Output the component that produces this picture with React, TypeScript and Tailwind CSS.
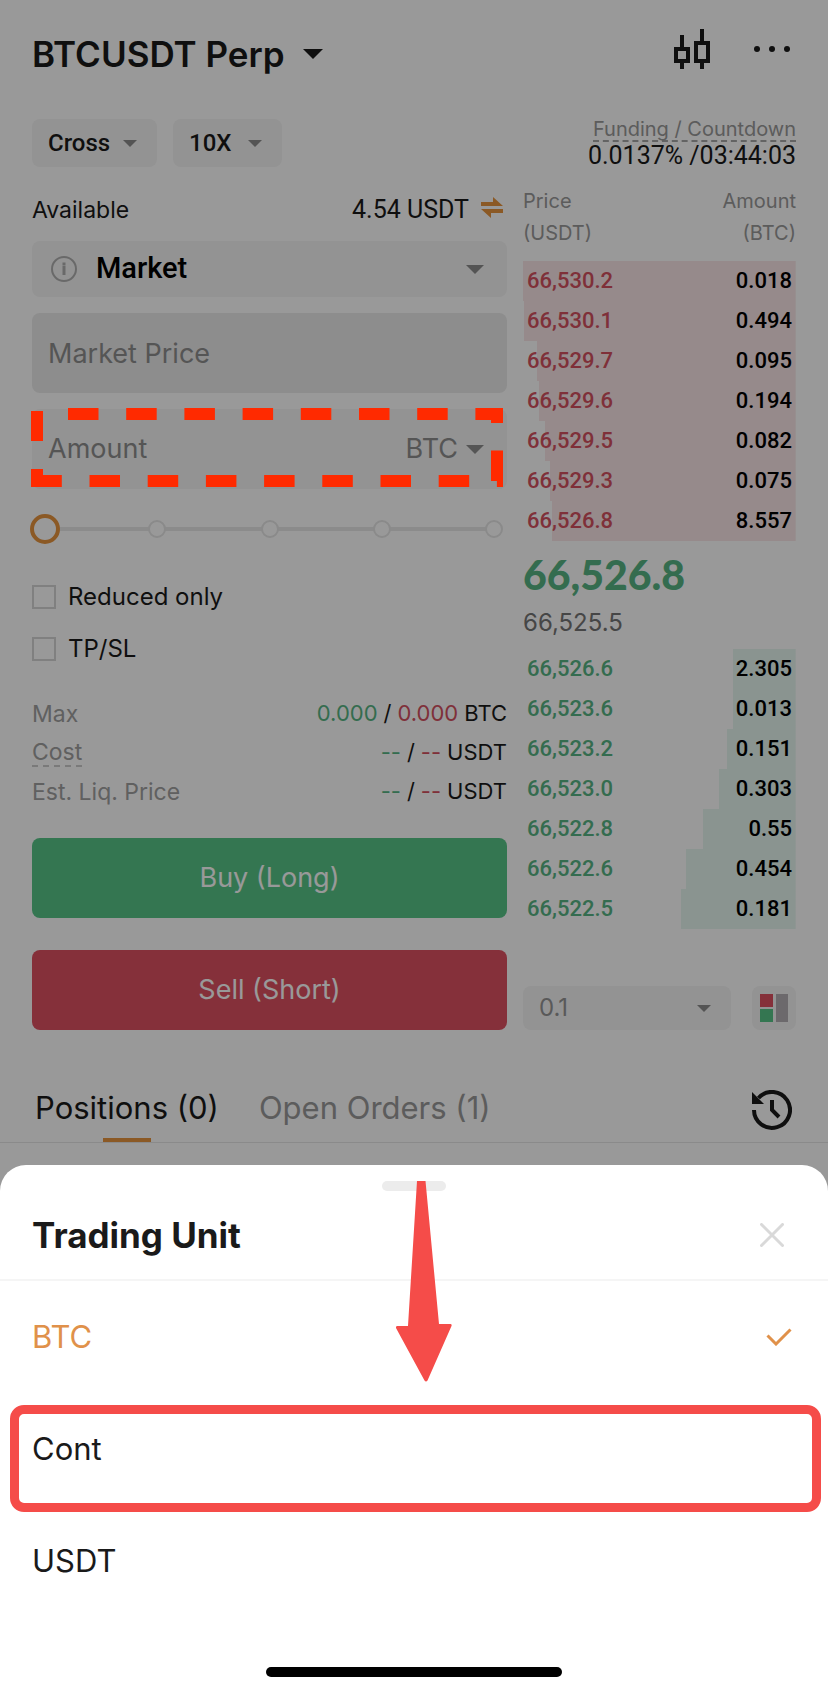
import { useState } from 'react';
import clsx from 'clsx';

const asks = [
  { price: '66,530.2', amount: '0.018', depth: 100 },
  { price: '66,530.1', amount: '0.494', depth: 99.5 },
  { price: '66,529.7', amount: '0.095', depth: 95 },
  { price: '66,529.6', amount: '0.194', depth: 94 },
  { price: '66,529.5', amount: '0.082', depth: 92 },
  { price: '66,529.3', amount: '0.075', depth: 90 },
  { price: '66,526.8', amount: '8.557', depth: 89.5 },
];

const bids = [
  { price: '66,526.6', amount: '2.305', depth: 23 },
  { price: '66,523.6', amount: '0.013', depth: 23 },
  { price: '66,523.2', amount: '0.151', depth: 25 },
  { price: '66,523.0', amount: '0.303', depth: 28 },
  { price: '66,522.8', amount: '0.55', depth: 34 },
  { price: '66,522.6', amount: '0.454', depth: 40 },
  { price: '66,522.5', amount: '0.181', depth: 42 },
];

const units = ['BTC', 'Cont', 'USDT'];

function Caret({ className }: { className?: string }) {
  return (
    <svg viewBox="0 0 18 9" className={className} fill="currentColor" aria-hidden="true">
      <path d="M0 0h18L9 9z" />
    </svg>
  );
}

interface DropdownProps {
  label: string;
  options: string[];
  className: string;
  caretClass: string;
}

function Dropdown({ label, options, className, caretClass }: DropdownProps) {
  return (
    <div className="relative flex items-center">
      <select aria-label={label} className={clsx('appearance-none rounded-lg bg-[#f5f5f5] outline-none', className)}>
        {options.map((o) => (
          <option key={o}>{o}</option>
        ))}
      </select>
      <Caret className={clsx('pointer-events-none absolute text-[#8c8c8c]', caretClass)} />
    </div>
  );
}

interface BookRowsProps {
  rows: typeof asks;
  priceClass: string;
  color: string;
}

function BookRows({ rows, priceClass, color }: BookRowsProps) {
  return (
    <tbody className="font-['Roboto',sans-serif] text-[22px] font-medium">
      {rows.map((row) => (
        <tr
          key={row.price}
          className="h-10"
          style={{ background: `linear-gradient(to left, ${color} ${row.depth}%, transparent ${row.depth}%)` }}
        >
          <td className={clsx('pb-0.5 pl-1', priceClass)}>{row.price}</td>
          <td className="pb-0.5 pr-1 text-right text-black">{row.amount}</td>
        </tr>
      ))}
    </tbody>
  );
}

function OrderBook() {
  return (
    <table className="w-full border-collapse">
      <thead>
        <tr className="text-left align-top text-[20px] leading-8 text-[#999999]">
          <th className="pb-3 font-normal">
            Price
            <br />
            (USDT)
          </th>
          <th className="pb-3 text-right font-normal">
            Amount
            <br />
            (BTC)
          </th>
        </tr>
      </thead>
      <BookRows rows={asks} priceClass="text-[#d4515f]" color="#fae6e8" />
      <tbody>
        <tr>
          <td colSpan={2} className="pb-0.5 pt-2.5">
            <p className="font-['Lato',sans-serif] text-[41px] font-black leading-[48px] text-[#57b584]">66,526.8</p>
            <p className="text-[24px] leading-[48px] text-[#757575]">66,525.5</p>
          </td>
        </tr>
      </tbody>
      <BookRows rows={bids} priceClass="text-[#57b584]" color="#e6f7f0" />
    </table>
  );
}

function InfoRow({ label, buy, sell, unit, hint }: { label: string; buy: string; sell: string; unit: string; hint?: boolean }) {
  return (
    <div className="flex h-[39px] items-center justify-between text-[22px]">
      <dt className={clsx('text-[23px] leading-[26px] text-[#a0a0a0]', hint && 'border-b-2 border-dashed border-[#cccccc]')}>
        {label}
      </dt>
      <dd className="flex gap-1.5 text-[#1a1a1a]">
        <span className="text-[#57b584]">{buy}</span>
        <span>/</span>
        <span className="text-[#d4515f]">{sell}</span>
        <span>{unit}</span>
      </dd>
    </div>
  );
}

function OrderForm({ onPickUnit }: { onPickUnit: () => void }) {
  const [percent, setPercent] = useState(0);

  return (
    <form className="flex flex-col" onSubmit={(e) => e.preventDefault()}>
      <div className="mb-1.5 flex h-[50px] items-center text-[23px] text-[#1a1a1a]">
        <span>Available</span>
        <span className="ml-auto font-['Roboto',sans-serif] text-[25px]">4.54 USDT</span>
        <button type="button" aria-label="Transfer" className="mb-1.5 ml-3 mr-1 text-[#e8953f]">
          <svg viewBox="0 0 22 21" className="h-[21px] w-[22px]" fill="currentColor">
            <path d="M0 5h12V0l10 9H0zM22 12v4H10v5L0 12z" />
          </svg>
        </button>
      </div>

      <div className="flex flex-col gap-4">
        <div className="relative">
          <Dropdown
            label="Order type"
            options={['Market', 'Limit']}
            className="h-14 w-full pl-16 text-[29px] font-medium text-black font-['Roboto',sans-serif]"
            caretClass="right-[23px] h-[9px] w-[18px]"
          />
          <svg viewBox="0 0 26 26" className="pointer-events-none absolute left-[19px] top-[15px] size-[26px] text-[#b0b0b0]" fill="none">
            <circle cx="13" cy="13" r="12" stroke="currentColor" strokeWidth="2" />
            <path d="M13 6.500v3M11.500 11.500H13V19" stroke="currentColor" strokeWidth="3" />
          </svg>
        </div>
        <input
          aria-label="Price"
          placeholder="Market Price"
          readOnly
          className="h-20 w-full rounded-lg bg-[#ebebeb] px-4 text-[27px] outline-none placeholder:text-[#8e8e8e]"
        />
        <div className="relative flex h-20 items-center rounded-lg bg-[#f5f5f5] pl-4 pr-[23px] text-[27px]">
          <input
            aria-label="Amount"
            placeholder="Amount"
            className="w-0 min-w-0 flex-1 bg-transparent outline-none placeholder:text-[#8e8e8e]"
          />
          <button type="button" onClick={onPickUnit} className="flex items-center gap-2 text-[#8e8e8e]">
            BTC
            <Caret className="h-[9px] w-[18px]" />
          </button>
          <svg
            viewBox="0 0 475 80"
            className="pointer-events-none absolute -left-px -top-px z-20 w-full"
            fill="none"
            stroke="#ff2a00"
            strokeWidth="12"
          >
            <path d="M37 6H466V73H30" strokeDasharray="30.500 27.700" />
            <path d="M6 33V3M6 79V61M6 73H30" />
          </svg>
        </div>
      </div>

      <div className="relative -ml-0.5 mr-1 mt-[25px] h-[30px]">
        <div className="absolute inset-x-4 top-[13px] h-1 bg-[#e8e8e8]" />
        <div className="flex h-full items-center justify-between pl-1.5">
          {[0, 25, 50, 75, 100].map((stop) => (
            <span key={stop} className="relative size-[18px] rounded-full border-2 border-[#e6e6e6] bg-white" />
          ))}
        </div>
        <input
          type="range"
          aria-label="Amount percentage"
          value={percent}
          step={25}
          onChange={(e) => setPercent(Number(e.target.value))}
          className="absolute inset-0 m-0 w-full appearance-none bg-transparent [&::-webkit-slider-thumb]:size-[30px] [&::-webkit-slider-thumb]:appearance-none [&::-webkit-slider-thumb]:rounded-full [&::-webkit-slider-thumb]:border-4 [&::-webkit-slider-thumb]:border-solid [&::-webkit-slider-thumb]:border-[#e8953f] [&::-webkit-slider-thumb]:bg-white"
        />
      </div>

      <div className="mt-[41px] flex flex-col gap-7">
        {['Reduced only', 'TP/SL'].map((name) => (
          <label key={name} className="flex items-center gap-3 text-[24px] leading-6 text-[#1a1a1a]">
            <input type="checkbox" className="size-6 appearance-none border-2 border-[#d6d6d6] checked:bg-[#e8953f]" />
            {name}
          </label>
        ))}
      </div>

      <dl className="mt-[33px]">
        <InfoRow label="Max" buy="0.000" sell="0.000" unit="BTC" />
        <InfoRow label="Cost" buy="--" sell="--" unit="USDT" hint />
        <InfoRow label="Est. Liq. Price" buy="--" sell="--" unit="USDT" />
      </dl>

      <div className="mt-[27px] flex flex-col gap-8 text-[27px] text-white">
        <button className="h-20 rounded-lg bg-[#57c587]">Buy (Long)</button>
        <button className="h-20 rounded-lg bg-[#de5061]">Sell (Short)</button>
      </div>
    </form>
  );
}

function UnitSheet({ unit, onSelect, onClose }: { unit: string; onSelect: (u: string) => void; onClose: () => void }) {
  return (
    <section role="dialog" aria-label="Trading Unit" className="relative z-20 rounded-t-[26px] bg-white pt-4 text-[#1a1a1a]">
      <div className="mx-auto h-2.5 w-16 rounded-full bg-[#ececec]" />
      <div className="flex h-[90px] items-center justify-between border-b-2 border-[#f5f5f5] pl-8 pr-11">
        <h2 className="text-[35px] font-bold">Trading Unit</h2>
        <button aria-label="Close" onClick={onClose} className="text-[#d9d9d9]">
          <svg viewBox="0 0 24 24" className="size-6" fill="none" stroke="currentColor" strokeWidth="3" strokeLinecap="round">
            <path d="M1.500 1.500l21 21M22.500 1.500l-21 21" />
          </svg>
        </button>
      </div>
      <ul>
        {units.map((u) => (
          <li key={u} className="relative">
            <button
              onClick={() => onSelect(u)}
              className={clsx('flex h-28 w-full items-center justify-between pl-8 pr-9 text-[31px]', u === unit && 'text-[#e0914a]')}
            >
              {u}
              {u === unit && (
                <svg viewBox="0 0 26 18" className="h-[18px] w-[26px]" fill="none" stroke="currentColor" strokeWidth="3">
                  <path d="M1.500 7.500L10 16L24.500 1.500" />
                </svg>
              )}
            </button>
            {u === 'Cont' && (
              <div className="pointer-events-none absolute left-2.5 right-[7px] top-3 h-[107px] rounded-[14px] border-[9px] border-[#f54c49]" />
            )}
          </li>
        ))}
      </ul>
      <div className="flex h-[76px] items-end justify-center pb-4">
        <div className="h-2.5 w-[296px] rounded-full bg-black" />
      </div>
      <svg viewBox="0 0 56 201" className="pointer-events-none absolute left-1/2 top-4 -ml-[18px] h-[201px] w-14" fill="#f54c49">
        <path d="M21 0h8.500L43 143h11.500q1.500 0 1 2L31.500 199.500q-1.500 2-3 0L0 147q-.5-1.800 1.500-2H12z" />
      </svg>
    </section>
  );
}

export default function App() {
  const [unit, setUnit] = useState('BTC');
  const [sheetOpen, setSheetOpen] = useState(true);

  return (
    <div className="relative flex min-h-screen flex-col overflow-hidden bg-white font-['Inter',sans-serif]">
      <main className="flex-1 pb-[21px]">
        <header className="flex justify-between px-8 pt-[29px] text-[#1a1a1a]">
          <button className="flex items-center gap-[18px] text-[35px] font-semibold leading-[50px]">
            BTCUSDT Perp
            <Caret className="h-2.5 w-5" />
          </button>
          <div className="flex items-start gap-[42px] pr-1">
            <button aria-label="Chart">
              <svg viewBox="0 0 36 40" className="h-10 w-9" fill="none" stroke="currentColor" strokeWidth="4">
                <path d="M2 20h12v12H2zM22 14h12v18H22zM8 6v14M8 32v8M28 0v14M28 32v8" />
              </svg>
            </button>
            <button aria-label="More">
              <svg viewBox="0 0 40 40" className="size-10" fill="currentColor">
                <circle cx="5" cy="20" r="3" />
                <circle cx="20" cy="20" r="3" />
                <circle cx="35" cy="20" r="3" />
              </svg>
            </button>
          </div>
        </header>

        <div className="mt-[37px] flex items-center gap-4 px-8">
          <Dropdown
            label="Margin mode"
            options={['Cross', 'Isolated']}
            className="h-12 w-[125px] pl-4 text-[24px] font-medium text-[#1a1a1a] font-['Roboto',sans-serif]"
            caretClass="right-5 h-[7px] w-3.5"
          />
          <Dropdown
            label="Leverage"
            options={['10X', '20X']}
            className="h-12 w-[109px] pl-4 text-[24px] font-medium text-[#1a1a1a] font-['Roboto',sans-serif]"
            caretClass="right-5 h-[7px] w-3.5"
          />
          <div className="ml-auto flex flex-col items-end pt-0.5">
            <span className="border-b-2 border-dashed border-[#a6a6a6] text-[20px] leading-[22px] text-[#999999]">
              Funding / Countdown
            </span>
            <span className="font-['Roboto',sans-serif] text-[25px] leading-7 text-[#1a1a1a]">0.0137% /03:44:03</span>
          </div>
        </div>

        <div className="mt-[15px] grid grid-cols-[475fr_273fr] gap-4 px-8">
          <OrderForm onPickUnit={() => setSheetOpen(true)} />
          <div className="flex flex-col justify-between">
            <OrderBook />
            <div className="flex justify-between">
              <Dropdown
                label="Price step"
                options={['0.1', '1', '10']}
                className="h-11 w-[208px] pl-4 text-[24px] text-[#959595]"
                caretClass="right-5 h-[7px] w-3.5"
              />
              <button aria-label="Book layout" className="flex size-11 items-center justify-center rounded-lg bg-[#f5f5f5]">
                <svg viewBox="0 0 28 28" className="size-7">
                  <path d="M0 0h13v13H0z" fill="#de5061" />
                  <path d="M0 15h13v13H0z" fill="#57c587" />
                  <path d="M16 0h12v28H16z" fill="#b5b0b5" />
                </svg>
              </button>
            </div>
          </div>
        </div>

        <nav className="mt-[54px] flex items-start gap-10 border-b border-[#e6e6e6] pl-[35px] pr-9 text-[31px] leading-[48px]">
          <button className="flex flex-col items-center gap-1.5 text-[#1a1a1a]">
            Positions (0)
            <span className="h-1 w-12 bg-[#e8953f]" />
          </button>
          <button className="text-[#999999]">Open Orders (1)</button>
          <button aria-label="Order history" className="ml-auto mt-1.5 text-[#1a1a1a]">
            <svg viewBox="0 0 40 40" className="size-10" fill="none" stroke="currentColor" strokeWidth="4">
              <path d="M2 20A18 18 0 1 0 6.500 8" />
              <path d="M20 10v10l7 7" />
              <path d="M0 2L12 14H0z" fill="currentColor" stroke="none" />
            </svg>
          </button>
        </nav>
      </main>

      {sheetOpen && (
        <>
          <div className="absolute inset-0 z-10 bg-black/40" onClick={() => setSheetOpen(false)} />
          <UnitSheet unit={unit} onSelect={setUnit} onClose={() => setSheetOpen(false)} />
        </>
      )}
    </div>
  );
}
